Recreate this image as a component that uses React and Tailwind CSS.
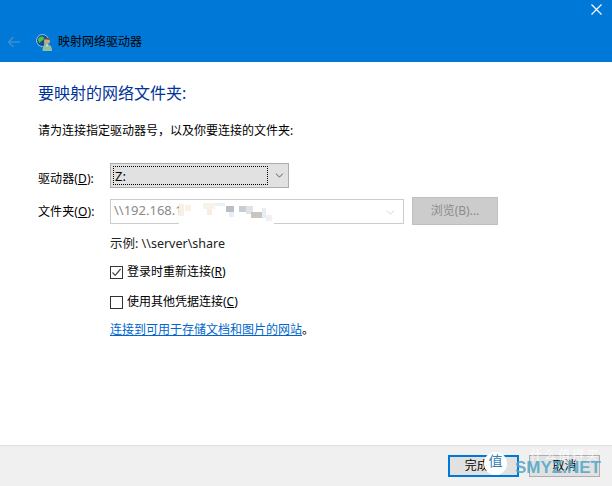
import { ChevronDown } from 'lucide-react';

const blurBlocks = [
  { c: 'left-[0px] top-[2px] w-[5px] h-[12px] bg-[#f5f0ea]' },
  { c: 'left-[6px] top-[3px] w-[6px] h-[6px] bg-[#fdf0e2]' },
  { c: 'left-[24px] top-[1px] w-[12px] h-[6px] bg-[#f7f3ea]' },
  { c: 'left-[28px] top-[7px] w-[5px] h-[6px] bg-[#faeee2]' },
  { c: 'left-[36px] top-[1px] w-[10px] h-[3px] bg-[#eef1f4]' },
  { c: 'left-[47px] top-[4px] w-[8px] h-[6px] bg-[#b9bfc9]' },
  { c: 'left-[50px] top-[10px] w-[5px] h-[5px] bg-[#e9eef3]' },
  { c: 'left-[60px] top-[4px] w-[7px] h-[6px] bg-[#c8cdd4]' },
  { c: 'left-[67px] top-[4px] w-[7px] h-[8px] bg-[#dfe2e6]' },
  { c: 'left-[72px] top-[10px] w-[11px] h-[6px] bg-[#c9c6c2]' },
  { c: 'left-[83px] top-[6px] w-[4px] h-[10px] bg-[#e6eef2]' },
  { c: 'left-[87px] top-[13px] w-[6px] h-[6px] bg-[#eef0f2]' },
];

function Checkbox({ checked }) {
  return (
    <span className="w-[13px] h-[13px] border border-[#333333] bg-white flex items-center justify-center shrink-0">
      {checked && (
        <svg width="11" height="11" viewBox="0 0 11 11" fill="none">
          <path d="M1.5 5.5 L4.2 8.3 L9.6 2" stroke="#444444" strokeWidth="1.2" />
        </svg>
      )}
    </span>
  );
}

function NetIcon() {
  return (
    <svg width="17" height="17" viewBox="0 0 17 17">
      <circle cx="6.5" cy="6.5" r="6" fill="#0f4f8f" stroke="#b9dcf2" strokeWidth="0.8" />
      <path d="M2 5 C4 2 7 2 8 4 C8 7 5 6 4 9 C3 9 2 7 2 5Z" fill="#4fc04a" />
      <path d="M8 9 C10 8 11 10 9 12 C8 12 8 10 8 9Z" fill="#7ccf6e" />
      <circle cx="11" cy="7" r="3" fill="#c9a58a" />
      <path d="M8 5.5 C9 3.5 13 3.5 14 6 C12 5.5 10 5.5 8 5.5Z" fill="#5a4a3a" />
      <path d="M6.5 17 C6.5 12 8.5 10.5 11 10.5 C14 10.5 16 12 16 17Z" fill="#8fbf9f" />
      <path d="M10 10.5 L11 13 L12 10.5Z" fill="#e8f2ea" />
    </svg>
  );
}

export default function App() {
  return (
    <div className="relative w-[612px] h-[486px] flex flex-col bg-white text-[12px] text-black overflow-hidden font-['Noto_Sans','Noto_Sans_CJK_SC',sans-serif]">
      <header className="h-[62px] bg-[#0078d7] flex flex-col shrink-0">
        <div className="h-[20px] flex justify-end pr-[10px] pt-[3px]">
          <svg width="11" height="11" viewBox="0 0 11 11" className="mt-[1px]">
            <path d="M0.5 0.5 L10.5 10.5 M10.5 0.5 L0.5 10.5" stroke="#ffffff" strokeWidth="1.2" />
          </svg>
        </div>
        <div className="flex items-center mt-[13px] h-[18px]">
          <svg width="14" height="12" viewBox="0 0 14 12" fill="none" className="ml-[7px]">
            <path d="M13 6 H1.5 M6.5 1 L1.5 6 L6.5 11" stroke="#3d8fd0" strokeWidth="1.5" />
          </svg>
          <span className="ml-[15px]"><NetIcon /></span>
          <span className="ml-[5px] leading-[18px] text-black">映射网络驱动器</span>
        </div>
      </header>

      <main className="flex-1 flex flex-col pl-[38px]">
        <h1 className="mt-[19px] text-[16px] leading-[24px] font-normal text-[#003399]">要映射的网络文件夹:</h1>
        <p className="mt-[17px] leading-[18px]">请为连接指定驱动器号，以及你要连接的文件夹:</p>

        <div className="mt-[23px] flex items-center h-[25px]">
          <label className="w-[72px] leading-[18px] mt-[6px] tracking-[0.1px]">驱动器(<span className="underline">D</span>):</label>
          <div className="w-[179px] h-[25px] bg-[#e1e1e1] border border-[#adadad] flex items-center p-[2px]">
            <div className="w-[157px] h-[19px] border border-dotted border-black leading-[19px] text-[13px] pl-[1px]">Z:</div>
            <ChevronDown size={13} strokeWidth={1.4} className="ml-[5px] text-[#333333]" />
          </div>
        </div>

        <div className="mt-[9px] flex items-center">
          <label className="w-[72px] leading-[18px] mt-[1px] tracking-[0.1px]">文件夹(<span className="underline">O</span>):</label>
          <div className="relative w-[294px] h-[25px] border border-[#cccccc] flex items-center pl-[3px]">
            <span className="text-[#8a8a8a] text-[13px]">\\192.168.1</span>
            <div className="absolute left-[68px] top-[2px] w-[95px] h-[22px] bg-white">
              {blurBlocks.map((b, i) => (
                <span key={i} className={`absolute ${b.c}`} />
              ))}
            </div>
            <ChevronDown size={13} strokeWidth={1} className="absolute right-[6px] top-[6px] text-[#b5b5b5]" />
          </div>
          <button className="ml-[8px] w-[86px] h-[28px] bg-[#cccccc] border border-[#bfbfbf] text-[#8c8c8c] text-center">浏览(B)...</button>
        </div>

        <div className="ml-[72px] flex flex-col">
          <p className="mt-[10px] leading-[18px] text-[12.5px] text-[#222222]">示例: \\server\share</p>
          <label className="mt-[10px] flex items-center gap-[4px] leading-[18px]">
            <Checkbox checked />
            <span>登录时重新连接(<span className="underline">R</span>)</span>
          </label>
          <label className="mt-[12px] flex items-center gap-[4px] leading-[18px]">
            <Checkbox />
            <span>使用其他凭据连接(<span className="underline">C</span>)</span>
          </label>
          <p className="mt-[10px] leading-[18px]">
            <a className="text-[#0066cc] underline">连接到可用于存储文档和图片的网站</a>。
          </p>
        </div>
      </main>

      <footer className="h-[41px] bg-[#f0f0f0] border-t border-[#dfdfdf] flex justify-end gap-[10px] pt-[9px] pr-[12px] shrink-0">
        <button className="w-[71px] h-[22px] bg-[#e1e1e1] border-2 border-[#0078d7] text-center leading-[18px]">完成(F)</button>
        <button className="w-[71px] h-[22px] bg-[#e1e1e1] border border-[#adadad] text-center leading-[20px]">取消</button>
      </footer>

      {/* watermark over the footer */}
      <div className="absolute left-[484px] top-[452px] w-[23px] h-[23px] rounded-full bg-white flex items-start justify-center text-[14px] leading-[18px] text-[#2f7fb5]">值</div>
      <div className="absolute left-[530px] top-[449px] text-[12px] leading-[14px] text-white/80 tracking-[2px]">什么值得买</div>
      <div className="absolute left-[515px] top-[458px] text-[17px] leading-[20px] font-bold text-[#4ea6c8]/85 font-['Liberation_Sans',sans-serif]">SMYZ.NET</div>
    </div>
  );
}
